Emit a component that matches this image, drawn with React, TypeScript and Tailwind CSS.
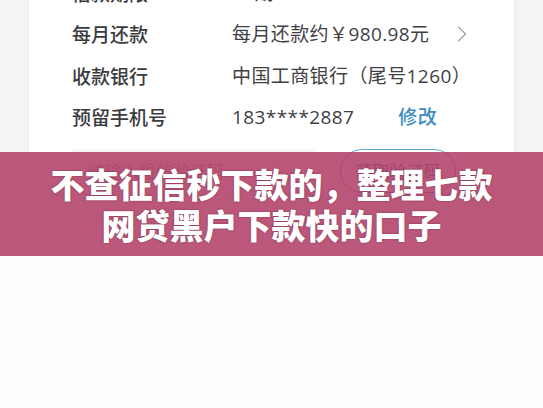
import { ChevronRight } from 'lucide-react'

const rows = [
	{ label: '借款期限', value: '12期' },
	{ label: '每月还款', value: '每月还款约￥980.98元', arrow: true },
	{ label: '收款银行', value: '中国工商银行（尾号1260）' },
	{ label: '预留手机号', value: '183****2887', edit: true },
]

export default function App() {
	return (
		<div
			className="relative w-[543px] h-[408px] overflow-hidden bg-[#fdfdfd]"
			style={{ fontFamily: '"Noto Sans CJK SC", "Noto Sans", sans-serif' }}
		>
			{/* form section */}
			<div className="h-[256px] bg-[#f4f4f6] pl-[29px] pr-[29px]">
				<div className="bg-white h-[221px] shadow-[0_0_6px_rgba(0,0,0,0.06)] -mt-[28px] pl-[43px] pr-[36px]">
					<div className="flex flex-col">
						{rows.map((row) => (
							<div key={row.label} className="flex items-center h-[41.5px] text-[19px] text-[#3b3b3e]">
								<div className="w-[160px] shrink-0 font-medium">{row.label}</div>
								<div
									className="flex items-center flex-1 text-[#3f3f44] tracking-[0.4px]"
									style={{ fontFamily: '"Open Sans", "Noto Sans CJK SC", sans-serif' }}
								>
									<span>{row.value}</span>
									{row.arrow && <ChevronRight className="ml-auto mr-[2px] text-[#a8a8ad]" size={28} strokeWidth={1.2} />}
									{row.edit && <span className="ml-[44px] text-[#3c8cc4] font-medium">修改</span>}
								</div>
							</div>
						))}
					</div>
					<div className="flex items-center mt-[11px] gap-[25px]">
						<div className="w-[243px] h-[44px] rounded bg-[#f6f6f8] flex items-center pl-[16px] text-[17px] text-[#a9a9ae]">
							请输入短信验证码
						</div>
						<div className="w-[116px] h-[44px] rounded-full border border-[#5aaad8] flex items-center justify-center text-[17px] text-[#3c8cc4]">
							获取验证码
						</div>
					</div>
				</div>
			</div>

			{/* title banner over the page */}
			<div className="absolute left-0 top-[152px] w-full h-[104px] bg-[#b03b64]/85 flex flex-col items-center justify-center">
				<div className="text-white font-black text-[34px] leading-[41px] [text-shadow:0_0_2px_rgba(60,0,20,0.5)]">
					不查征信秒下款的，整理七款
				</div>
				<div className="text-white font-black text-[34px] leading-[41px] [text-shadow:0_0_2px_rgba(60,0,20,0.5)]">
					网贷黑户下款快的口子
				</div>
			</div>
		</div>
	)
}
